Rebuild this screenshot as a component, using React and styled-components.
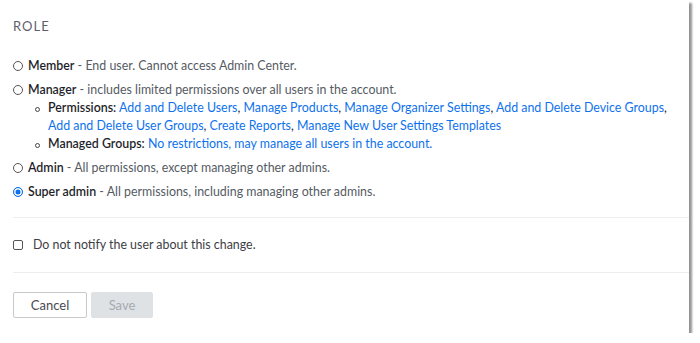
import React, { useState } from "react";
import styled, { createGlobalStyle } from "styled-components";

const GlobalStyle = createGlobalStyle`
  body {
    margin: 0;
    background: #ffffff;
    font-family: Lato, "Open Sans", sans-serif;
  }
`;

const roles = [
  { name: "Member", desc: "End user. Cannot access Admin Center." },
  {
    name: "Manager",
    desc: "includes limited permissions over all users in the account.",
    details: [
      {
        label: "Permissions:",
        links: [
          "Add and Delete Users",
          "Manage Products",
          "Manage Organizer Settings",
          "Add and Delete Device Groups",
          "Add and Delete User Groups",
          "Create Reports",
          "Manage New User Settings Templates",
        ],
      },
      {
        label: "Managed Groups:",
        links: ["No restrictions, may manage all users in the account."],
      },
    ],
  },
  { name: "Admin", desc: "All permissions, except managing other admins." },
  { name: "Super admin", desc: "All permissions, including managing other admins." },
];

const Card = styled.div`
  width: 689px;
  height: 333px;
  box-sizing: border-box;
  background: #ffffff;
  box-shadow: 3px 3px 2px rgba(0, 0, 0, 0.42);
  padding: 17px 0 15px 13px;
  display: flex;
  flex-direction: column;
  font-size: 12.4px;
  line-height: 18px;
  color: #232333;
`;

const Heading = styled.div`
  font-size: 13px;
  letter-spacing: 1px;
  color: #5f5f6b;
  margin-bottom: 22px;
`;

const Options = styled.div`
  display: flex;
  flex-direction: column;
  gap: 6px;
`;

const Option = styled.label`
  display: block;
  cursor: pointer;
`;

const OptionLine = styled.div`
  display: flex;
  align-items: center;
`;

const Radio = styled.span`
  flex: none;
  width: 10px;
  height: 10px;
  box-sizing: border-box;
  border-radius: 50%;
  border: 1px solid ${(p) => (p.$checked ? "#0e71eb" : "#555")};
  background: ${(p) => (p.$checked ? "#0e71eb" : "#fff")};
  box-shadow: ${(p) => (p.$checked ? "inset 0 0 0 1.5px #fff" : "none")};
  margin-right: 5px;
`;

const Name = styled.span`
  font-weight: 600;
  color: #1f1f2b;
`;

const Desc = styled.span`
  color: #555b63;
  white-space: pre;
`;

const SubList = styled.ul`
  margin: 0;
  padding: 0 0 0 35px;
  width: 632px;
  list-style: none;
`;

const SubItem = styled.li`
  position: relative;
  &::before {
    content: "";
    position: absolute;
    left: -13px;
    top: 8px;
    width: 3px;
    height: 3px;
    border: 1px solid #444;
    border-radius: 50%;
  }
`;

const SubLabel = styled.span`
  font-weight: 600;
  color: #1f1f2b;
`;

const Link = styled.a`
  color: #0e72ed;
  text-decoration: none;
`;

const Divider = styled.div`
  height: 1px;
  background: #ededed;
  margin: ${(p) => p.$margin};
`;

const CheckRow = styled.label`
  display: flex;
  align-items: center;
  cursor: pointer;
  color: #3d3d45;
`;

const Checkbox = styled.span`
  width: 10px;
  height: 10px;
  box-sizing: border-box;
  border: 1px solid #555;
  border-radius: 2px;
  margin-right: 10px;
  background: ${(p) => (p.$checked ? "#0e71eb" : "#fff")};
`;

const Buttons = styled.div`
  display: flex;
  gap: 4px;
`;

const Button = styled.button`
  height: 26px;
  box-sizing: border-box;
  padding: 0;
  width: ${(p) => p.$width}px;
  font-family: Lato, "Open Sans", sans-serif;
  font-size: 13px;
  border-radius: 2px;
  border: 1px solid ${(p) => (p.$disabled ? "#dfe2e5" : "#c9c9c9")};
  background: ${(p) => (p.$disabled ? "#dfe2e5" : "#ffffff")};
  color: ${(p) => (p.$disabled ? "#a5abb1" : "#4a4a52")};
`;

export default function App() {
  const [role, setRole] = useState("Super admin");
  const [noNotify, setNoNotify] = useState(false);

  return (
    <>
      <GlobalStyle />
      <Card>
        <Heading>ROLE</Heading>
        <Options>
          {roles.map((r) => (
            <Option key={r.name} onClick={() => setRole(r.name)}>
              <OptionLine>
                <Radio $checked={role === r.name} />
                <span>
                  <Name>{r.name}</Name>
                  <Desc> - {r.desc}</Desc>
                </span>
              </OptionLine>
              {r.details && (
                <SubList>
                  {r.details.map((d) => (
                    <SubItem key={d.label}>
                      <SubLabel>{d.label}</SubLabel>{" "}
                      {d.links.map((l, i) => (
                        <React.Fragment key={l}>
                          <Link>{l}</Link>
                          {i < d.links.length - 1 ? ", " : ""}
                        </React.Fragment>
                      ))}
                    </SubItem>
                  ))}
                </SubList>
              )}
            </Option>
          ))}
        </Options>
        <Divider $margin="16px 0 18px" />
        <CheckRow onClick={() => setNoNotify(!noNotify)}>
          <Checkbox $checked={noNotify} />
          Do not notify the user about this change.
        </CheckRow>
        <Divider $margin="18px 0 19px" />
        <Buttons>
          <Button $width={74}>Cancel</Button>
          <Button $width={62} $disabled>
            Save
          </Button>
        </Buttons>
      </Card>
    </>
  );
}
